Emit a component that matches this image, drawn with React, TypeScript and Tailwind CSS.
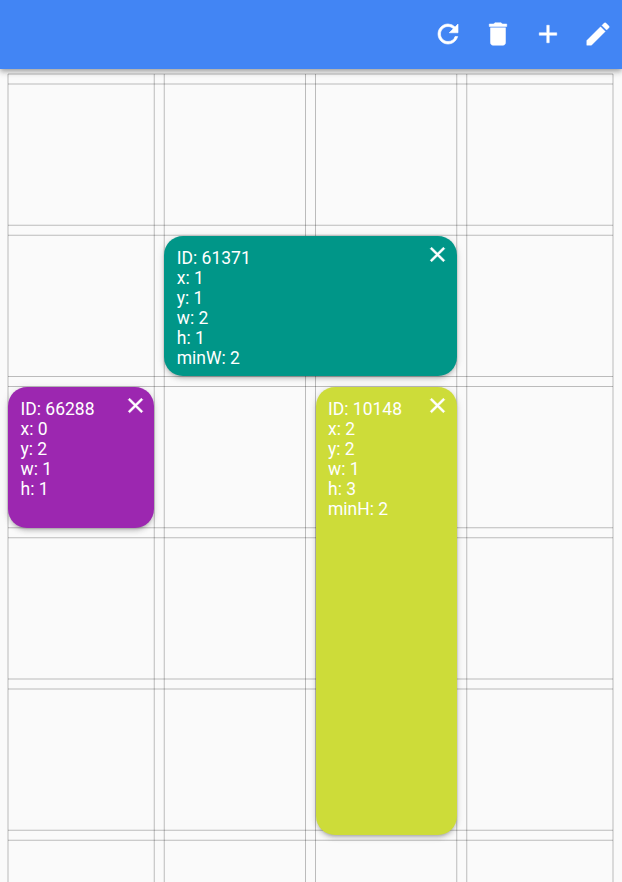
type Item = { id: number; lines: string[]; className: string };

const items: Item[] = [
  {
    id: 61371,
    lines: ["x: 1", "y: 1", "w: 2", "h: 1", "minW: 2"],
    className: "bg-[#009688] col-start-2 col-span-2 row-start-2 mt-[0.5px] mb-[0.6px]",
  },
  {
    id: 66288,
    lines: ["x: 0", "y: 2", "w: 1", "h: 1"],
    className: "bg-[#9c27b0] col-start-1 row-start-3",
  },
  {
    id: 10148,
    lines: ["x: 2", "y: 2", "w: 1", "h: 3", "minH: 2"],
    className: "bg-[#cddc39] col-start-3 row-start-3 row-span-3 -mb-[5px]",
  },
];

const icons = {
  refresh:
    "M17.65 6.35A7.958 7.958 0 0 0 12 4c-4.42 0-7.99 3.58-7.99 8s3.57 8 7.99 8c3.73 0 6.84-2.55 7.73-6h-2.08A5.99 5.99 0 0 1 12 18c-3.31 0-6-2.69-6-6s2.69-6 6-6c1.66 0 3.14.69 4.22 1.78L13 11h7V4l-2.35 2.35z",
  remove: "M6 19c0 1.1.9 2 2 2h8c1.1 0 2-.9 2-2V7H6v12zM19 4h-3.5l-1-1h-5l-1 1H5v2h14V4z",
  add: "M19 13h-6v6h-2v-6H5v-2h6V5h2v6h6v2z",
  edit: "M3 17.25V21h3.75L17.81 9.94l-3.75-3.75L3 17.25zM20.71 7.04a.996.996 0 0 0 0-1.41l-2.34-2.34a.996.996 0 0 0-1.41 0l-1.83 1.83 3.75 3.75 1.83-1.83z",
  close:
    "M19 6.41 17.59 5 12 10.59 6.41 5 5 6.41 10.59 12 5 17.59 6.41 19 12 13.41 17.59 19 19 17.59 13.41 12z",
};

function Icon({ name, className }: { name: keyof typeof icons; className: string }) {
  return (
    <svg viewBox="0 0 24 24" fill="currentColor" stroke="currentColor" className={className}>
      <path d={icons[name]} />
    </svg>
  );
}

const verticals = [8, 154.25, 164.25, 305.5, 315.5, 456.75, 466.75, 613];
const horizontals = [5, 15, 156.25, 166.25, 307.5, 317.5, 458.75, 468.75, 610, 620, 761.25, 771.25];

function GridLines() {
  return (
    <svg className="absolute inset-0" width="622" height="813" stroke="#000" strokeOpacity="0.25" strokeWidth="1">
      {horizontals.map((y) => (
        <line key={y} x1="8" x2="613" y1={y} y2={y} />
      ))}
      {verticals.map((x) => (
        <line key={x} x1={x} x2={x} y1="5" y2="813" />
      ))}
    </svg>
  );
}

function Card({ item }: { item: Item }) {
  return (
    <div
      className={`relative rounded-[19px] px-[12.5px] pt-3 text-white shadow-[0_3px_3px_-2px_rgba(0,0,0,0.16),0_3px_5px_0_rgba(0,0,0,0.14),0_1px_8px_0_rgba(0,0,0,0.1)] ${item.className}`}
    >
      <p>ID: {item.id}</p>
      {item.lines.map((line) => (
        <p key={line}>{line}</p>
      ))}
      <Icon name="close" className="absolute right-[6.5px] top-[6.5px] size-[25px] stroke-[0.5px]" />
    </div>
  );
}

export default function App() {
  return (
    <div className="flex h-[882px] w-[622px] flex-col overflow-hidden bg-[#fafafa] font-['Roboto',sans-serif] text-[17.5px] leading-5">
      <header className="relative z-10 flex h-[69px] shrink-0 items-center justify-end gap-5 bg-[#4285f4] pb-px pr-[9px] text-white shadow-[0_2px_4px_-1px_rgba(0,0,0,0.2),0_4px_5px_0_rgba(0,0,0,0.14),0_1px_10px_0_rgba(0,0,0,0.12)]">
        <Icon name="refresh" className="size-[30px] stroke-[0.5px]" />
        <Icon name="remove" className="size-[30px] stroke-[0.4px]" />
        <Icon name="add" className="size-[30px] stroke-[0.4px]" />
        <Icon name="edit" className="size-[30px] stroke-[0.3px]" />
      </header>
      <main className="relative flex-1">
        <GridLines />
        <div className="relative ml-2 grid grid-cols-[146.25px_141.25px_141.25px_146.25px] grid-rows-[repeat(5,141.25px)] gap-2.5 pt-[15px]">
          {items.map((item) => (
            <Card key={item.id} item={item} />
          ))}
        </div>
      </main>
    </div>
  );
}
